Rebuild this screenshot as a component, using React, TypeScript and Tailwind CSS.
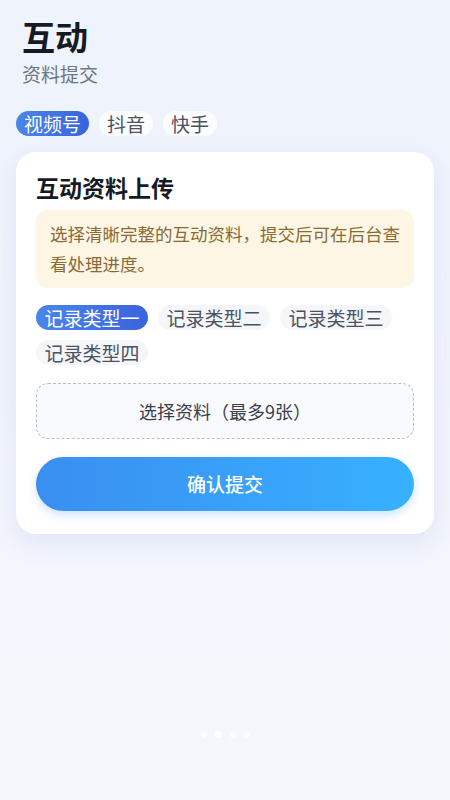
import { useState } from 'react';

const PLATFORMS = ['视频号', '抖音', '快手'];
const RECORD_TYPES = ['记录类型一', '记录类型二', '记录类型三', '记录类型四'];

export default function App() {
  const [platform, setPlatform] = useState(0);
  const [recordType, setRecordType] = useState(0);

  return (
    <div
      className="min-h-[800px] w-full bg-gradient-to-b from-[#eef3fc] to-[#f5f7fc] flex flex-col"
      style={{ fontFamily: '"Noto Sans CJK SC", "Noto Sans", sans-serif' }}
    >
      {/* Header */}
      <div className="px-[22px] pt-[13px]">
        <div className="text-[33px] font-bold leading-[46px] text-[#151a24]">互动</div>
        <div className="mt-[2px] text-[19px] leading-[26px] text-[#6f7682]">资料提交</div>
      </div>

      {/* Platform tabs */}
      <div className="flex gap-[10px] px-[16px] mt-[24px]">
        {PLATFORMS.map((p, i) => (
          <button
            key={p}
            onClick={() => setPlatform(i)}
            className={
              i === platform
                ? 'h-[25px] px-[8px] rounded-full text-[19px] leading-[25px] text-white bg-gradient-to-r from-[#4a86ea] to-[#3a63dc]'
                : 'h-[25px] px-[8px] rounded-full text-[19px] leading-[25px] text-[#4b5260] bg-white/80'
            }
          >
            {p}
          </button>
        ))}
      </div>

      {/* Card */}
      <div className="mx-[16px] mt-[16px] rounded-[20px] bg-white px-[20px] pt-[19px] pb-[23px] shadow-[0_8px_24px_rgba(200,206,240,0.45)]">
        <div className="text-[23px] font-bold leading-[32px] text-[#151a24]">互动资料上传</div>

        <div className="mt-[7px] rounded-[12px] bg-[#fdf6e4] px-[14px] py-[9px] text-[17.5px] leading-[30px] text-[#8a6a35]">
          选择清晰完整的互动资料，提交后可在后台查看处理进度。
        </div>

        <div className="mt-[17px] flex flex-wrap gap-x-[10px] gap-y-[10px]">
          {RECORD_TYPES.map((t, i) => (
            <button
              key={t}
              onClick={() => setRecordType(i)}
              className={
                i === recordType
                  ? 'h-[25px] w-[112px] rounded-full text-[19px] leading-[25px] text-white bg-gradient-to-r from-[#4a86ea] to-[#3a63dc]'
                  : 'h-[25px] w-[112px] rounded-full text-[19px] leading-[25px] text-[#4b5260] bg-[#f4f6f9]'
              }
            >
              {t}
            </button>
          ))}
        </div>

        <button className="mt-[18px] h-[56px] w-full rounded-[12px] border border-dashed border-[#b8bec8] bg-[#f8fafd] text-[18px] text-[#3a414d]">
          选择资料（最多9张）
        </button>

        <button className="mt-[18px] h-[54px] w-full rounded-full bg-gradient-to-r from-[#3a8ef0] to-[#37b1ff] text-[19px] font-medium text-white shadow-[0_4px_10px_rgba(58,150,245,0.25)]">
          确认提交
        </button>
      </div>

      <div className="flex-1" />

      {/* Page dots */}
      <div className="flex justify-center items-center gap-[8px] pb-[62px]">
        <span className="h-[6px] w-[6px] rounded-full bg-white/70" />
        <span className="h-[7px] w-[7px] rounded-full bg-white" />
        <span className="h-[6px] w-[6px] rounded-full bg-white/70" />
        <span className="h-[6px] w-[6px] rounded-full bg-white/70" />
      </div>
    </div>
  );
}
